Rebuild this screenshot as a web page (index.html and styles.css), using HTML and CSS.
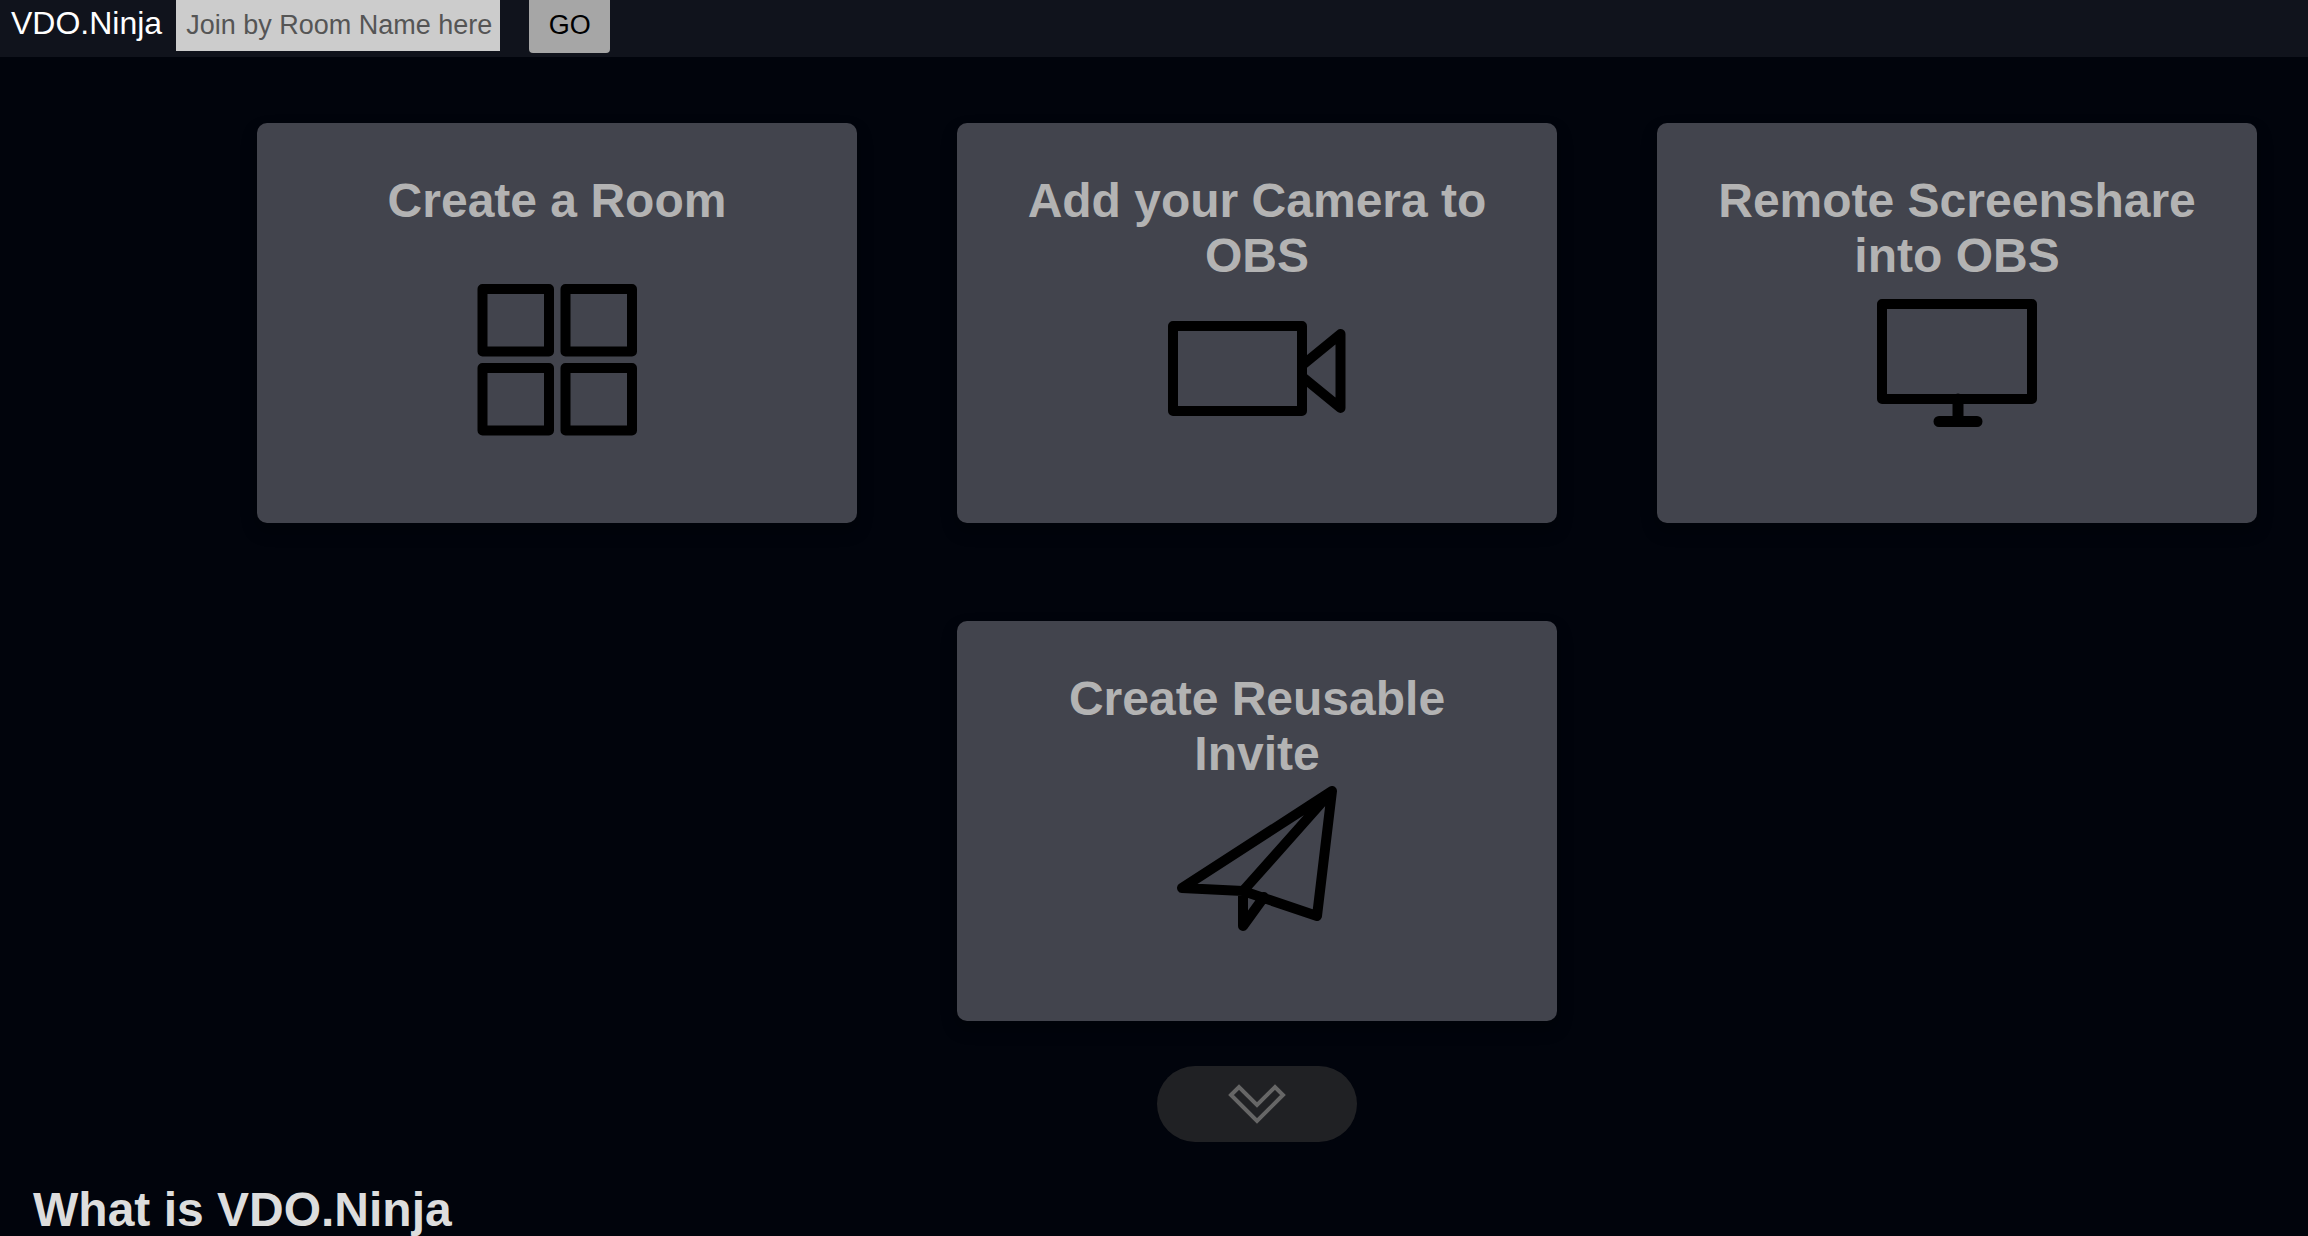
FILE: index.html
```html
<!DOCTYPE html>
<html lang="en">
<head>
  <meta charset="utf-8">
  <meta name="viewport" content="width=device-width, initial-scale=1">
  <title>VDO.Ninja</title>
  <link rel="stylesheet" href="styles.css">
</head>
<body>
  <header class="topbar">
    <a class="brand" href="#">VDO.Ninja</a>
    <form class="join">
      <input class="join-room" type="text" placeholder="Join by Room Name here" aria-label="Join by Room Name here">
      <button class="join-go" type="button">GO</button>
    </form>
  </header>

  <main>
    <section class="launcher">
      <div class="cards">
        <button class="card" type="button">
          <span class="card-title">Create a Room</span>
          <svg class="card-icon" viewBox="0 0 200 160" aria-hidden="true">
            <rect x="25.500" y="6" width="66.500" height="62.500"/>
            <rect x="108.500" y="6" width="66.500" height="62.500"/>
            <rect x="25.500" y="85" width="66.500" height="62.500"/>
            <rect x="108.500" y="85" width="66.500" height="62.500"/>
          </svg>
        </button>
        <button class="card" type="button">
          <span class="card-title">Add your Camera to OBS</span>
          <svg class="card-icon" viewBox="0 0 200 160" aria-hidden="true">
            <rect x="16" y="43" width="129" height="85"/>
            <path d="M145 82.500 183.500 51v74L145 93.500"/>
          </svg>
        </button>
        <button class="card" type="button">
          <span class="card-title">Remote Screenshare into OBS</span>
          <svg class="card-icon" viewBox="0 0 200 160" aria-hidden="true">
            <rect x="25" y="21" width="150" height="95"/>
            <path d="M101 116v22M82 138.500h38" stroke-width="11"/>
          </svg>
        </button>
        <button class="card" type="button">
          <span class="card-title">Create Reusable Invite</span>
          <svg class="card-icon" viewBox="0 0 200 160" aria-hidden="true">
            <path d="M175 10 25 107l61 3 74 25ZL86 110v35l21-29"/>
          </svg>
        </button>
      </div>

      <button class="more" type="button" aria-label="Show more">
        <svg class="more-icon" viewBox="0 0 60 42" aria-hidden="true">
          <path d="M4 12 12 4l18 18L48 4l8 8-26 26Z"/>
        </svg>
      </button>
    </section>

    <section class="about">
      <h2 class="about-title">What is VDO.Ninja</h2>
    </section>
  </main>
</body>
</html>
```

FILE: styles.css
```css
* {
  box-sizing: border-box;
}

body {
  margin: 0;
  background: #01040c;
  color: #ddd;
  font-family: "Liberation Sans", Arial, Helvetica, sans-serif;
}

button,
input {
  margin: 0;
  border: 0;
  font-family: inherit;
}

button {
  cursor: pointer;
}

/* Top bar */
.topbar {
  display: flex;
  align-items: flex-start;
  gap: 14px;
  height: 57px;
  padding-left: 11px;
  background: #10131c;
}

.brand {
  color: #fff;
  font-size: 32px;
  line-height: 46px;
  text-decoration: none;
}

.join {
  display: flex;
  align-items: flex-start;
  gap: 29px;
}

.join-room {
  width: 324px;
  height: 51px;
  padding: 0 0 0 10px;
  border-radius: 0;
  background: #ccc;
  color: #000;
  font-size: 27px;
}

.join-room::placeholder {
  color: #555;
  opacity: 1;
}

.join-go {
  width: 81px;
  height: 53px;
  padding: 0 0 3px;
  border-radius: 0 0 4px 4px;
  background: #a6a6a6;
  color: #000;
  font-size: 27px;
}

/* Launcher cards */
.launcher {
  display: flex;
  flex-direction: column;
  align-items: center;
  gap: 45px;
  padding: 66px 0 40px 206px;
}

.cards {
  display: flex;
  flex-wrap: wrap;
  justify-content: center;
  gap: 98px 100px;
}

.card {
  display: flex;
  flex-direction: column;
  align-items: center;
  width: 600px;
  max-width: 100%;
  min-height: 400px;
  padding: 50px;
  border-radius: 10px;
  background: #42444d;
  box-shadow: 0 8px 16px rgba(0, 0, 0, 0.3);
}

.card-title {
  min-height: 110px;
  color: #b3b3b3;
  font-size: 48px;
  font-weight: 700;
  line-height: 55px;
}

.card-icon {
  width: 200px;
  height: 160px;
  fill: none;
  stroke: #000;
  stroke-width: 10px;
  stroke-linecap: round;
  stroke-linejoin: round;
}

.more {
  display: flex;
  align-items: center;
  justify-content: center;
  width: 200px;
  height: 76px;
  padding: 0;
  border-radius: 38px;
  background: #202124;
}

.more-icon {
  width: 60px;
  height: 42px;
  fill: none;
  stroke: #666;
  stroke-width: 4px;
}

/* About */
.about {
  padding: 0 33px;
}

.about-title {
  margin: 0;
  font-size: 48px;
  font-weight: 700;
  line-height: 55px;
}
```
